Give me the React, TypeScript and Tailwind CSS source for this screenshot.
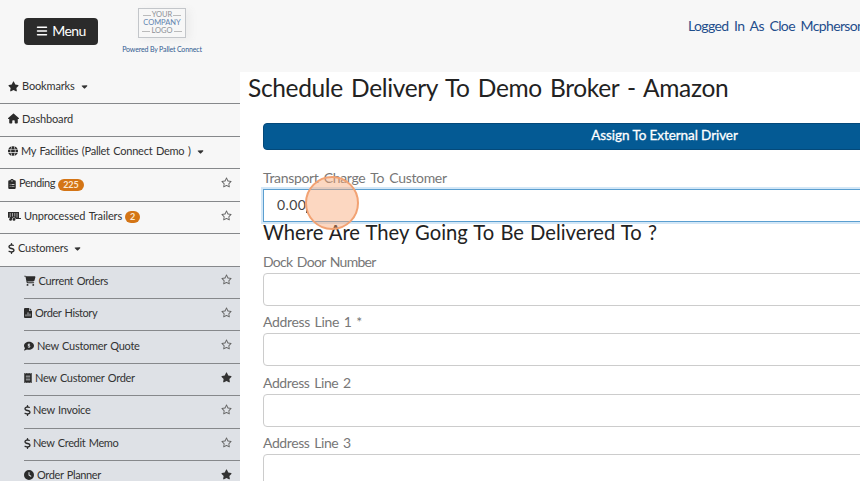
import type { ReactNode } from "react";
import {
  FaBars,
  FaStar,
  FaRegStar,
  FaHouse,
  FaGlobe,
  FaClipboardList,
  FaDollarSign,
  FaCartShopping,
  FaCommentDollar,
  FaReceipt,
  FaClock,
  FaCaretDown,
} from "react-icons/fa6";

function TrailerIcon() {
  return (
    <svg width="13" height="9" viewBox="0 0 13 9" fill="currentColor">
      <path d="M0 0h11v6H13v1H7.8a2 2 0 0 0-3.8 0H3A2 2 0 0 0 0 6z" />
      <path d="M2.2 1v4M4.5 1v3.5M6.8 1v3.5M9 1v4.5" stroke="#f7f7f7" strokeWidth=".6" />
      <circle cx="2.6" cy="7.4" r="1.4" />
      <circle cx="6" cy="7.4" r="1.4" />
    </svg>
  );
}

function FileChartIcon() {
  return (
    <svg width="8" height="10" viewBox="0 0 8 10" fill="currentColor">
      <path d="M1 0h4v3h3v6a1 1 0 0 1-1 1H1a1 1 0 0 1-1-1V1a1 1 0 0 1 1-1zM5.6 0 8 2.4H5.6z" />
      <path d="M2 8.3V6.4M4 8.3V4.4M6 8.3V5.6" stroke="#dee1e6" strokeWidth=".8" />
    </svg>
  );
}

type Row = {
  icon: ReactNode;
  label: string;
  text: string;
  caret?: boolean;
  badge?: string;
  star?: "on" | "off";
};

const topRows: Row[] = [
  { icon: <FaStar size={11} />, label: "Bookmarks", text: "tracking-[-0.15px]", caret: true },
  { icon: <FaHouse size={11} />, label: "Dashboard", text: "tracking-[-0.15px]" },
  { icon: <FaGlobe size={10} />, label: "My Facilities (Pallet Connect Demo )", text: "tracking-[-0.25px]", caret: true },
  { icon: <FaClipboardList size={10} className="-mx-px" />, label: "Pending", text: "tracking-[-0.4px]", badge: "225", star: "off" },
  { icon: <TrailerIcon />, label: "Unprocessed Trailers", text: "tracking-[-0.13px]", badge: "2", star: "off" },
  { icon: <FaDollarSign size={11} className="-ml-[2.5px] -mr-[1.5px]" />, label: "Customers", text: "tracking-[-0.2px]", caret: true },
];

const subRows: Row[] = [
  { icon: <FaCartShopping size={11.5} />, label: "Current Orders", text: "tracking-[-0.32px]", star: "off" },
  { icon: <FileChartIcon />, label: "Order History", text: "tracking-[-0.42px]", star: "off" },
  { icon: <FaCommentDollar size={10} />, label: "New Customer Quote", text: "tracking-[-0.28px]", star: "off" },
  { icon: <FaReceipt size={10} className="-mx-px" />, label: "New Customer Order", text: "tracking-[-0.32px]", star: "on" },
  { icon: <FaDollarSign size={11} className="-mx-[2.5px]" />, label: "New Invoice", text: "tracking-[-0.28px]", star: "off" },
  { icon: <FaDollarSign size={11} className="-mx-[2.5px]" />, label: "New Credit Memo", text: "tracking-[-0.36px]", star: "off" },
  { icon: <FaClock size={10} />, label: "Order Planner", text: "tracking-[-0.38px]", star: "on" },
];

function NavRow({ row, sub }: { row: Row; sub?: boolean }) {
  return (
    <li
      className={
        "flex h-[32.43px] shrink-0 items-center border-b border-[#86888b] pr-2 pb-[2.6px] text-[11px] text-[#333] " +
        (sub ? "ml-6" : "pl-2")
      }
    >
      <span className="mr-[3px] flex shrink-0 text-[#2b2b2b]">{row.icon}</span>
      <span className={"whitespace-nowrap [word-spacing:1px] " + row.text}>{row.label}</span>
      {row.caret && <FaCaretDown size={9} className="ml-[5px]" />}
      {row.badge && (
        <span className="mt-[2px] ml-[3px] flex h-3 items-center rounded-full bg-[#d47516] px-[5px] text-[9px] font-bold text-[#fbe9d4]">
          {row.badge}
        </span>
      )}
      {row.star && (
        <span className="mr-[0.5px] ml-auto pb-[2px]">
          {row.star === "on" ? <FaStar size={11} /> : <FaRegStar size={11} className="text-[#666]" />}
        </span>
      )}
    </li>
  );
}

const fields = [
  { label: "Dock Door Number", text: "tracking-[-0.7px]" },
  { label: "Address Line 1 *", text: "tracking-[-0.35px]" },
  { label: "Address Line 2", text: "tracking-[-0.4px]" },
  { label: "Address Line 3", text: "tracking-[-0.4px]" },
];

export default function App() {
  return (
    <div className="flex h-[481px] w-[860px] flex-col overflow-hidden bg-white font-['Lato','Liberation_Sans',sans-serif]">
      <header className="flex h-[72px] shrink-0 items-start bg-[#f7f7f7]">
        <button className="mt-[18px] ml-6 flex h-[27px] w-[74px] items-center justify-center gap-[4px] rounded bg-[#2b2b2b] pb-[2px] text-[14px] tracking-[-0.6px] text-white">
          <FaBars size={12} />
          <span>Menu</span>
        </button>
        <div className="ml-[22px] flex w-[84px] flex-col items-center pt-2">
          <div className="flex h-[30px] w-12 flex-col items-center justify-center border border-[#c3c6ca] text-[7.5px] leading-[8px] text-[#8b8f96] shadow-[4px_2px_8px_#ececec]">
            <span className="flex items-center gap-px">
              <i className="h-px w-2 bg-[#bbb]" />YOUR<i className="h-px w-2 bg-[#bbb]" />
            </span>
            <span className="text-[#5f82ae]">COMPANY</span>
            <span className="flex items-center gap-px">
              <i className="h-px w-2 bg-[#bbb]" />LOGO<i className="h-px w-2 bg-[#bbb]" />
            </span>
          </div>
          <span className="mt-[6px] text-[7px] leading-[10px] tracking-[-0.15px] whitespace-nowrap text-[#315b91]">
            Powered By Pallet Connect
          </span>
        </div>
        <span className="mt-[16px] ml-auto w-[172px] text-[14px] leading-5 tracking-[-0.62px] whitespace-nowrap text-[#1f4e8c] [word-spacing:2.6px]">
          Logged In As Cloe Mcpherson
        </span>
      </header>

      <div className="flex min-h-0 flex-1">
        <nav className="h-full w-60 shrink-0 overflow-hidden bg-[#f7f7f7]">
          <ul className="flex flex-col">
            {topRows.map((r) => (
              <NavRow key={r.label} row={r} />
            ))}
          </ul>
          <ul className="flex flex-col bg-[#dee1e6]">
            {subRows.map((r) => (
              <NavRow key={r.label} row={r} sub />
            ))}
          </ul>
        </nav>

        <main className="flex min-w-0 flex-1 flex-col overflow-hidden">
          <h1 className="h-[51px] shrink-0 pl-2 text-[24.5px] leading-[32px] tracking-[-0.34px] whitespace-nowrap text-[#222] [word-spacing:2.2px]">
            Schedule Delivery To Demo Broker - Amazon
          </h1>
          <div className="ml-[23px] flex w-[803px] shrink-0 flex-col">
            <button className="h-[27px] rounded border border-[#04497a] bg-[#045a94] pb-[2px] text-[13.5px] tracking-[-0.08px] text-white [-webkit-text-stroke:0.3px_white]">
              Assign To External Driver
            </button>
            <label className="mt-[17px] h-[22px] text-[14px] leading-[21px] tracking-[-0.33px] whitespace-nowrap text-[#777] [word-spacing:2px]">
              Transport Charge To Customer
            </label>
            <div className="relative flex h-[33px] items-center border border-[#5b9fd0] pb-[2px] pl-[13px] text-[14px] tracking-[0.4px] text-[#444] shadow-[0_0_0_2px_#d3e7f7]">
              0.00
              <i className="h-4 w-px bg-[#333]" />
              <span className="absolute top-[-14px] left-[41px] size-[54px] rounded-full border-2 border-[#f2a273] bg-[#f9a676]/45" />
            </div>
            <h2 className="h-[28.6px] text-[20.2px] leading-[20px] whitespace-nowrap text-[#222] [word-spacing:1px]">
              Where Are They Going To Be Delivered To ?
            </h2>
            {fields.map((f) => (
              <div key={f.label} className="flex h-[60.6px] flex-col">
                <label className={"h-[22px] text-[14px] leading-[22px] whitespace-nowrap text-[#777] [word-spacing:1.5px] " + f.text}>
                  {f.label}
                </label>
                <div className="h-[33px] rounded border border-[#ccc] bg-white" />
              </div>
            ))}
          </div>
        </main>
      </div>
    </div>
  );
}
